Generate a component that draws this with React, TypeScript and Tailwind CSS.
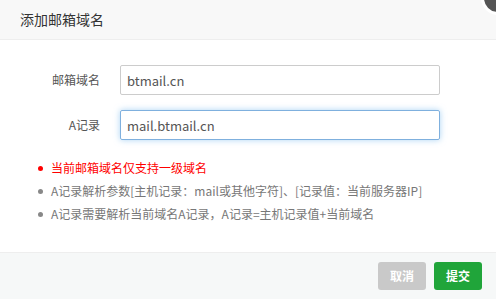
import { useState } from 'react';

const notes = [
  { text: '当前邮箱域名仅支持一级域名', red: true },
  { text: 'A记录解析参数[主机记录：mail或其他字符]、[记录值：当前服务器IP]', red: false },
  { text: 'A记录需要解析当前域名A记录，A记录=主机记录值+当前域名', red: false },
];

export default function App() {
  const [domain, setDomain] = useState('btmail.cn');
  const [record, setRecord] = useState('mail.btmail.cn');

  return (
    <div
      className="relative w-[496px] h-[299px] bg-white overflow-hidden flex flex-col"
      style={{ fontFamily: '"Noto Sans CJK SC", "Liberation Sans", sans-serif' }}
    >
      {/* 标题栏 */}
      <div className="h-[40px] shrink-0 bg-[#f8f8f8] border-b border-[#eeeeee] flex items-center pl-[20px] text-[14px] text-[#333]">
        添加邮箱域名
      </div>
      <span className="absolute -right-[19px] -top-[19px] w-[34px] h-[34px] rounded-full bg-[#555] border-[3px] border-white" />

      {/* 表单 */}
      <div className="flex-1 flex flex-col pt-[25px]">
        <div className="flex items-center h-[30px]">
          <label className="w-[100px] text-right text-[12px] text-[#555]">邮箱域名</label>
          <input
            value={domain}
            onChange={(e) => setDomain(e.target.value)}
            className="ml-[20px] w-[320px] h-[30px] px-[6px] border border-[#ccc] rounded-[2px] text-[13px] text-[#555] outline-none"
          />
        </div>
        <div className="flex items-center h-[30px] mt-[15px]">
          <label className="w-[100px] text-right text-[12px] text-[#555]">A记录</label>
          <input
            value={record}
            onChange={(e) => setRecord(e.target.value)}
            className="ml-[20px] w-[320px] h-[30px] px-[6px] border border-[#7fb0de] rounded-[2px] text-[13px] text-[#555] outline-none shadow-[0_0_6px_rgba(102,175,233,0.55)]"
          />
        </div>

        <ul className="mt-[20px] flex flex-col gap-[7px] pl-[38px]">
          {notes.map((n) => (
            <li
              key={n.text}
              className={`flex items-center h-[16px] text-[12px] ${n.red ? 'text-[#f00]' : 'text-[#777]'}`}
            >
              <span className={`w-[5px] h-[5px] rounded-full mr-[8px] ${n.red ? 'bg-[#f00]' : 'bg-[#888]'}`} />
              {n.text}
            </li>
          ))}
        </ul>
      </div>

      {/* 底部按钮 */}
      <div className="h-[47px] shrink-0 bg-[#f6f8f8] border-t border-[#eeeeee] flex items-center justify-end gap-[8px] pr-[14px]">
        <button className="w-[48px] h-[28px] rounded-[3px] bg-[#c9c9c9] text-white text-[12px] font-bold">取消</button>
        <button className="w-[48px] h-[28px] rounded-[3px] bg-[#20a53a] text-white text-[12px] font-bold">提交</button>
      </div>
    </div>
  );
}
